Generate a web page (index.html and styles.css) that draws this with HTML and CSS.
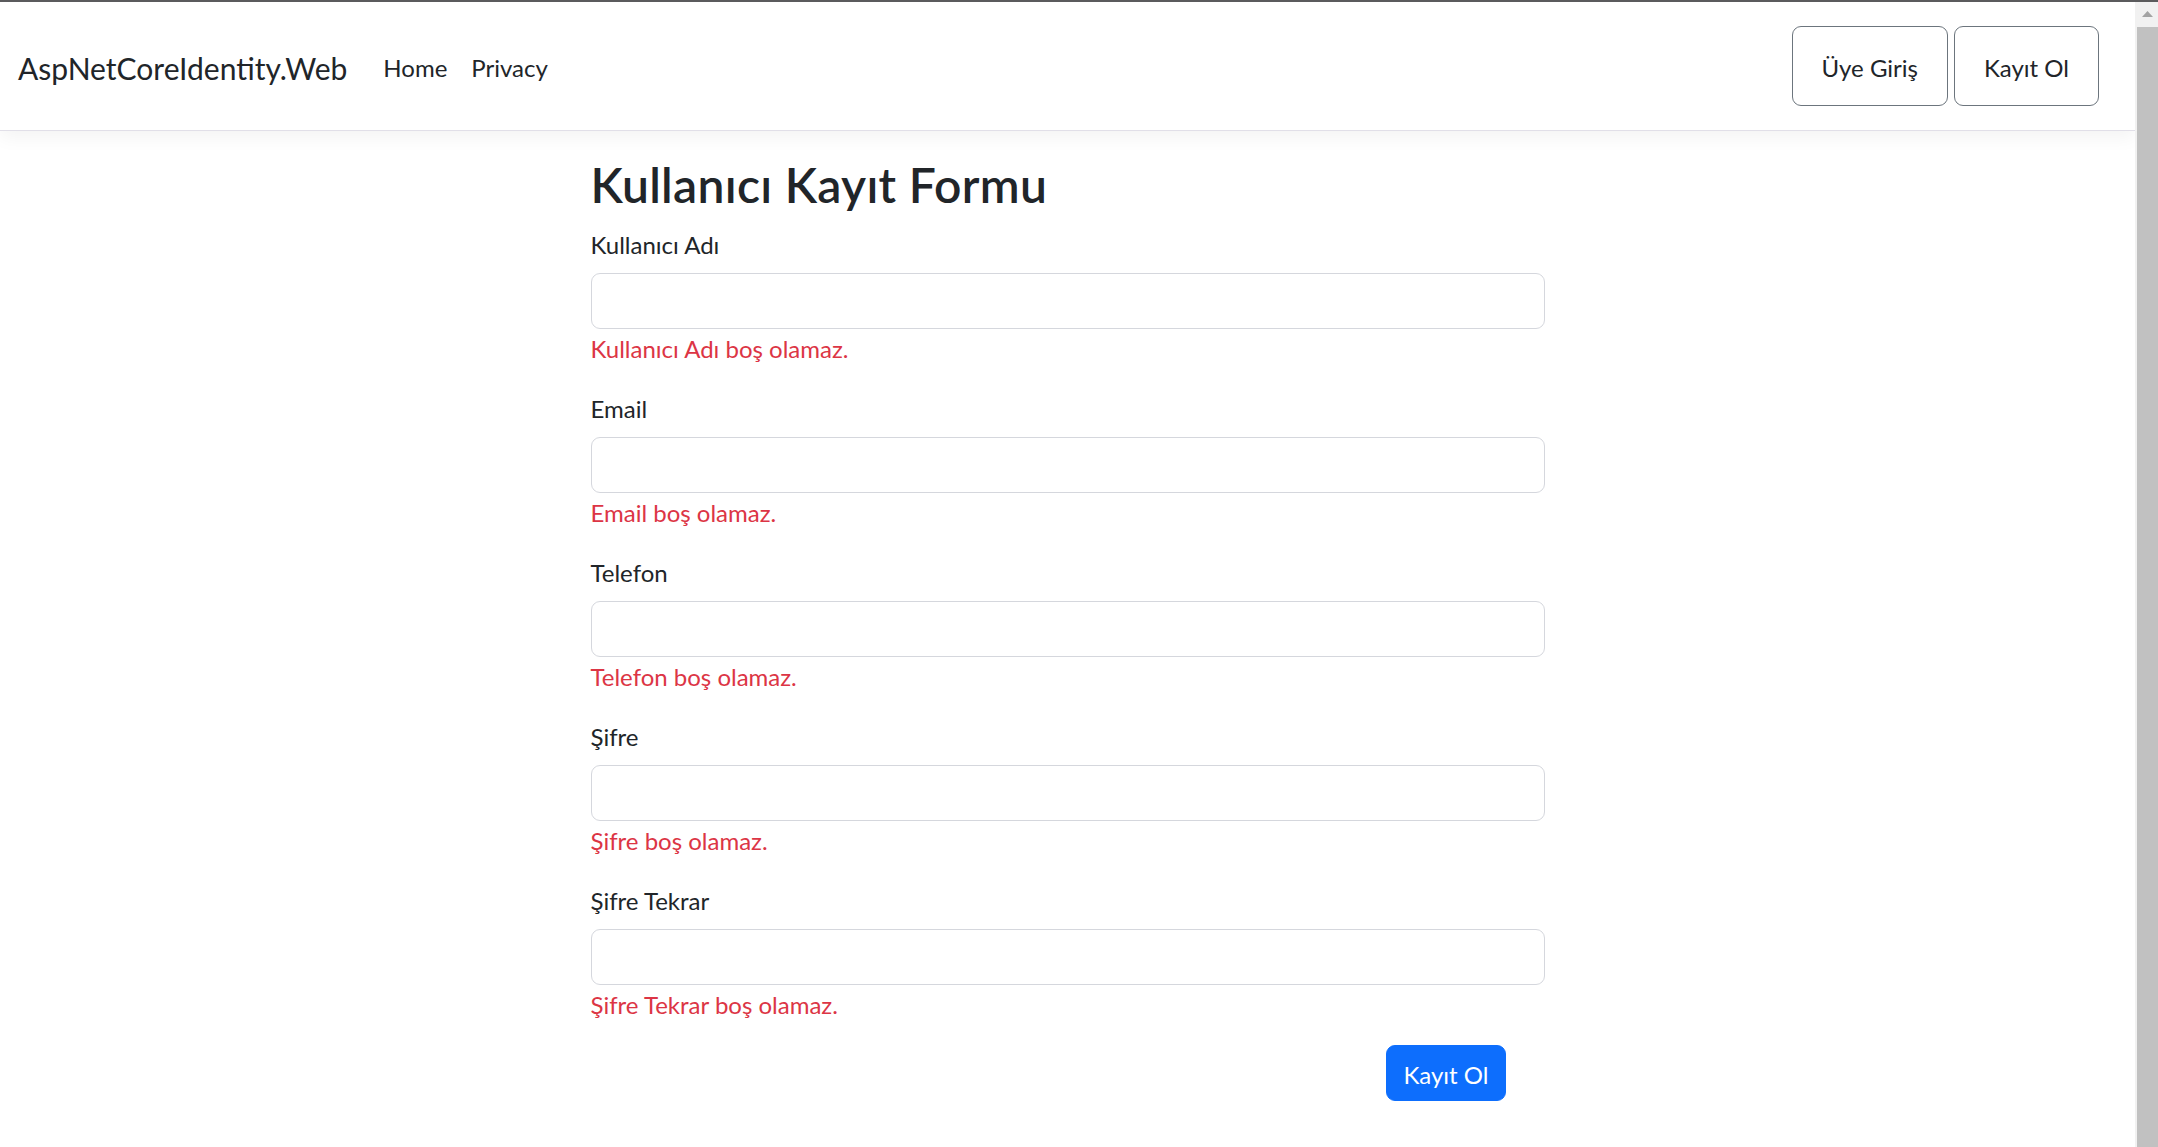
FILE: index.html
```html
<!DOCTYPE html>
<html lang="tr">
<head>
<meta charset="utf-8">
<title>Kayıt Ol - AspNetCoreIdentity.Web</title>
<link rel="stylesheet" href="styles.css">
</head>
<body>
<div class="topline"></div>
<div class="window">
  <div class="page">
    <header class="navbar">
      <a class="brand" href="#">AspNetCoreIdentity.Web</a>
      <nav class="nav-links">
        <a class="nav-link" href="#">Home</a>
        <a class="nav-link" href="#">Privacy</a>
      </nav>
      <div class="nav-actions">
        <a class="btn-outline" href="#">Üye Giriş</a>
        <a class="btn-outline" href="#">Kayıt Ol</a>
      </div>
    </header>
    <main class="content">
      <form class="register-form">
        <h2 class="title">Kullanıcı Kayıt Formu</h2>
        <div class="field">
          <label class="label">Kullanıcı Adı</label>
          <input class="input" type="text">
          <span class="error">Kullanıcı Adı boş olamaz.</span>
        </div>
        <div class="field">
          <label class="label">Email</label>
          <input class="input" type="text">
          <span class="error">Email boş olamaz.</span>
        </div>
        <div class="field">
          <label class="label">Telefon</label>
          <input class="input" type="text">
          <span class="error">Telefon boş olamaz.</span>
        </div>
        <div class="field">
          <label class="label">Şifre</label>
          <input class="input" type="password">
          <span class="error">Şifre boş olamaz.</span>
        </div>
        <div class="field">
          <label class="label">Şifre Tekrar</label>
          <input class="input" type="password">
          <span class="error">Şifre Tekrar boş olamaz.</span>
        </div>
        <div class="actions">
          <button class="btn-primary" type="button">Kayıt Ol</button>
        </div>
      </form>
    </main>
  </div>
  <div class="scrollbar">
    <div class="sb-button">
      <svg width="11" height="6" viewBox="0 0 11 6"><polygon points="0,6 5.5,0 11,6" fill="#a3a3a3"/></svg>
    </div>
    <div class="sb-thumb"></div>
  </div>
</div>
</body>
</html>
```

FILE: styles.css
```css
* { box-sizing: border-box; }

html, body {
  margin: 0;
  padding: 0;
  height: 100%;
  overflow: hidden;
  background: #fff;
}

body {
  font-family: Lato, "Open Sans", "Liberation Sans", sans-serif;
  font-size: 24px;
  line-height: 36px;
  color: #212529;
}

.topline {
  height: 2px;
  background: #5b5b5d;
}

.window {
  display: flex;
  height: calc(100% - 2px);
}

.page {
  flex: 1;
  min-width: 0;
  overflow: hidden;
}

.navbar {
  display: flex;
  align-items: center;
  height: 129px;
  padding: 0 36px 0 18px;
  border-bottom: 1px solid #e1dfe8;
  box-shadow: 0 6px 18px rgba(0, 0, 0, 0.05);
  position: relative;
  background: #fff;
}

.brand {
  font-size: 30px;
  line-height: 42px;
  padding-top: 3px;
  color: #212529;
  text-decoration: none;
  margin-right: 24px;
}

.nav-links {
  display: flex;
}

.nav-link {
  color: #212529;
  text-decoration: none;
  padding: 3px 12px 0;
  font-size: 24px;
  line-height: 33px;
}

.nav-actions {
  margin-left: auto;
  display: flex;
  gap: 6px;
}

.btn-outline {
  display: flex;
  align-items: center;
  justify-content: center;
  height: 80px;
  padding: 3px 29px 0;
  border: 1px solid #6c757d;
  border-radius: 9px;
  color: #212529;
  text-decoration: none;
  font-size: 24px;
  line-height: 33px;
}

.content {
  padding-top: 24px;
}

.register-form {
  width: 954px;
  margin: 0 auto;
}

.title {
  margin: 0 0 12px;
  padding-top: 3px;
  font-size: 48px;
  line-height: 54.6px;
  font-weight: 600;
  letter-spacing: 0.3px;
  color: #212529;
}

.field {
  display: flex;
  flex-direction: column;
  align-items: flex-start;
  margin-bottom: 24px;
}

.label {
  display: block;
  margin-bottom: 12px;
  padding-top: 3px;
  line-height: 33px;
}

.input {
  display: block;
  width: 100%;
  height: 56px;
  padding: 9px 18px;
  border: 1px solid #d5d7dd;
  border-radius: 9px;
  background: #fff;
  font: inherit;
  color: #212529;
  outline: none;
}

.error {
  color: #dc3545;
  padding-top: 3px;
  line-height: 33px;
}

.actions {
  display: flex;
  justify-content: flex-end;
  padding-right: 39px;
}

.btn-primary {
  height: 56px;
  padding: 3px 16px 0;
  border: 1px solid #0d6efd;
  border-radius: 9px;
  background: #0d6efd;
  color: #fff;
  font: inherit;
  font-size: 24px;
  line-height: 33px;
  cursor: pointer;
}

.scrollbar {
  width: 23px;
  flex: none;
  display: flex;
  flex-direction: column;
  background: #f1f1f1;
  padding-left: 2px;
}

.sb-button {
  height: 25px;
  display: flex;
  align-items: center;
  justify-content: center;
  padding-bottom: 2px;
}

.sb-thumb {
  flex: 1;
  background: #c1c1c1;
}
```
